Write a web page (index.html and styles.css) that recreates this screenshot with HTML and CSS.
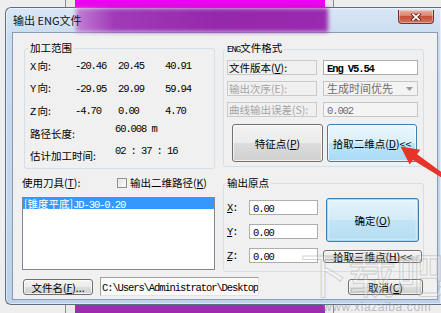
FILE: index.html
```html
<!DOCTYPE html>
<html lang="zh-CN">
<head>
  <meta charset="UTF-8" />
  <title>输出 ENG文件</title>
  <link rel="stylesheet" href="styles.css">
</head>
<body>

<!-- window behind the dialog -->
<div class="desk-window"><div class="desk-window-body"></div></div>

<!-- Dialog -->
<div class="dialog">
  <div class="titlebar">
    <div class="glass-tint"></div>
    <span class="title">输出 ENG文件</span>
    <button class="close-btn">
      <svg width="10" height="8" viewBox="0 0 10 8">
        <path d="M2 1.2 L8 6.8 M8 1.2 L2 6.8" stroke="#5c1d15" stroke-width="3.4" stroke-linecap="square" fill="none"/>
        <path d="M2 1.2 L8 6.8 M8 1.2 L2 6.8" stroke="#ffffff" stroke-width="1.8" stroke-linecap="square" fill="none"/>
      </svg>
    </button>
  </div>

  <div class="client">
    <div class="row-top">
      <!-- range -->
      <fieldset class="group group-range">
        <legend>加工范围</legend>
        <div class="range-grid">
          <span><span class="num">X</span>&nbsp;向:</span><span class="num">-20.46</span><span class="num">20.45</span><span class="num">40.91</span>
          <span><span class="num">Y</span>&nbsp;向:</span><span class="num">-29.95</span><span class="num">29.99</span><span class="num">59.94</span>
          <span><span class="num">Z</span>&nbsp;向:</span><span class="num">-4.70</span><span class="num">0.00</span><span class="num">4.70</span>
          <span>路径长度:</span><span class="num later">60.008 m</span>
          <span>估计加工时间:</span><span class="num later">02 : 37 : 16</span>
        </div>
      </fieldset>

      <!-- format -->
      <fieldset class="group group-format">
        <legend><span class="small">ENG</span>文件格式</legend>
        <div class="format-body">
          <div class="field-row">
            <div class="static-box">文件版本(<u>V</u>):</div>
            <div class="edit"><span class="num bold">Eng V5.54</span></div>
          </div>
          <div class="field-row">
            <div class="static-box off">输出次序(E):</div>
            <div class="combo">
              <span>生成时间优先</span>
              <svg width="7" height="4" viewBox="0 0 7 4"><path d="M0 0 H7 L3.5 4 Z" fill="#9a9a9a"/></svg>
            </div>
          </div>
          <div class="field-row">
            <div class="static-box off">曲线输出误差(S):</div>
            <div class="edit off"><span class="num">0.002</span></div>
          </div>
          <div class="btn-row">
            <button class="btn big">特征点(<u>P</u>)</button>
            <button class="btn big hot">拾取二维点(<u>D</u>)&lt;&lt;</button>
          </div>
        </div>
      </fieldset>
    </div>

    <div class="row-mid">
      <div class="tools">
        <div class="tools-head">
          <span class="lbl">使用刀具(<u>T</u>):</span>
          <span class="check"></span>
          <span>输出二维路径(<u>K</u>)</span>
        </div>
        <div class="listbox">
          <div class="sel">[锥度平底]<span class="num">JD-30-0.20</span></div>
        </div>
      </div>

      <fieldset class="group group-origin">
        <legend>输出原点</legend>
        <div class="origin-body">
          <div class="xyz">
            <span class="num"><u>X</u>:</span><div class="edit"><span class="num">0.00</span></div>
            <span class="num"><u>Y</u>:</span><div class="edit"><span class="num">0.00</span></div>
            <span class="num"><u>Z</u>:</span><div class="edit"><span class="num">0.00</span></div>
          </div>
          <div class="origin-btns">
            <button class="btn ok">确定(<u>O</u>)</button>
            <button class="btn pick3">拾取三维点(<u>H</u>)&lt;&lt;</button>
          </div>
        </div>
      </fieldset>
    </div>

    <div class="row-bottom">
      <button class="btn file">文件名(<u>F</u>)...</button>
      <div class="path"><span class="num">C:\Users\Administrator\Desktop</span></div>
      <button class="btn cancel">取消(<u>C</u>)</button>
    </div>
  </div>
</div>

<!-- site watermark -->
<div class="watermark">下载吧</div>
<div class="watermark-url">www.xiazaiba.com</div>

<!-- red pointer arrow -->
<svg class="arrow" width="441" height="313" viewBox="0 0 441 313">
  <polygon points="400.5,146.5 420.3,149.8 417.1,154.3 441,171.7 441,177.3 412.9,159.9 409.7,164.4" fill="#e5352b"/>
</svg>

</body>
</html>
```

FILE: styles.css
```css
* { margin: 0; padding: 0; box-sizing: border-box; }

body {
  width: 441px;
  height: 313px;
  overflow: hidden;
  position: relative;
  background: #eeeeee;
  font-family: "Noto Sans CJK SC", sans-serif;
  font-size: 10.5px;
  color: #000;
}

u { text-decoration: underline; }

.num {
  font-family: "Liberation Mono", monospace;
  font-size: 10.5px;
  letter-spacing: -1.1px;
}

.bold { font-weight: bold; }

/* window behind */
.desk-window {
  position: absolute;
  left: 65px;
  top: 0;
  width: 269px;
  height: 313px;
  border: 1px solid #8b8b8b;
  border-width: 0 1px;
  background: #e9e9e9;
  padding: 0 8px 0 9px;
}

.desk-window-body {
  height: 100%;
  background: linear-gradient(to bottom, #f000f0 0, #f000f0 20px, #a43ab8 280px, #9a2cb0 313px);
}

/* dialog frame */
.dialog {
  position: absolute;
  left: 5px;
  top: 7px;
  width: 436px;
  height: 298px;
  border: 1px solid #5f6f82;
  border-right: none;
  border-radius: 6px 0 0 6px;
  background: linear-gradient(to bottom, #d9e7f6 0, #cadcf0 30px, #bdd2ea 100%);
  box-shadow: inset 0 0 0 1px rgba(255,255,255,0.5);
  display: flex;
  flex-direction: column;
}

.titlebar {
  position: relative;
  height: 24px;
  flex: none;
  display: flex;
  align-items: center;
  padding-left: 7px;
}

.glass-tint {
  position: absolute;
  left: 70px;
  top: 0;
  width: 252px;
  height: 24px;
  background: linear-gradient(to right, #c27fd4 0, #a03bb8 15%, #9628ab 55%, #9a2aaf 100%);
  filter: blur(2px);
}

.title {
  position: relative;
  font-size: 11px;
  color: #111;
}

.close-btn {
  position: relative;
  margin-left: auto;
  margin-right: 7px;
  align-self: flex-start;
  margin-top: 2px;
  width: 36px;
  height: 14px;
  border: 1px solid #7a3128;
  border-top: none;
  border-radius: 0 0 4px 4px;
  background: linear-gradient(#eab0a2 0%, #d88470 45%, #c6503a 50%, #d27560 100%);
  box-shadow: inset 0 0 0 1px rgba(255,255,255,0.35);
  display: flex;
  align-items: center;
  justify-content: center;
}

/* client area */
.client {
  flex: 1;
  margin: 0 3px 4px 6px;
  border: 1px solid #8a9cb2;
  background: #f0f0f0;
  padding-left: 9px;
  display: flex;
  flex-direction: column;
}

.row-top {
  display: flex;
  align-items: flex-start;
  height: 136px;
  padding-top: 9px;
}

.group {
  border: 1px solid #d5dfe5;
  border-radius: 3px;
  min-width: 0;
}

.group legend {
  padding: 0 2px;
  margin-left: 1px;
  line-height: 12px;
  font-size: 10.5px;
}

.group legend .small {
  font-family: "Liberation Mono", monospace;
  font-size: 9px;
  letter-spacing: -1px;
}

.group-range {
  margin-left: 2px;
  width: 191px;
}

.group-range legend { margin-left: 3px; }

.range-grid {
  display: grid;
  grid-template-columns: 45px 43px 47px 1fr;
  grid-auto-rows: 22.5px;
  align-items: center;
  padding: 1px 0 0 5px;
  white-space: nowrap;
  line-height: 12px;
}

.range-grid .later {
  grid-column: 2 / 5;
  margin-left: 40px;
  align-self: start;
}

.group-format {
  margin-left: 8px;
  width: 201px;
}

.format-body {
  padding: 4px 5px 4px 3px;
}

.field-row {
  display: grid;
  grid-template-columns: 90px 95px;
  column-gap: 6px;
  height: 15px;
}

.field-row + .field-row { margin-top: 6px; }

.static-box {
  border: 1px solid #cacaca;
  line-height: 13px;
  padding-left: 1px;
  white-space: nowrap;
  overflow: hidden;
}

.static-box.off { color: #a4a4a4; }

.edit {
  border: 1px solid #abadb3;
  background: #fff;
  line-height: 13px;
  padding-left: 3px;
  white-space: nowrap;
  overflow: hidden;
}

.edit.off {
  background: #f4f4f4;
  border-color: #c6c6c6;
  color: #6d6d6d;
}

.combo {
  border: 1px solid #c6c6c6;
  background: #f3f3f3;
  color: #6d6d6d;
  font-size: 11px;
  line-height: 13px;
  display: flex;
  align-items: center;
  justify-content: space-between;
  padding: 0 4px 0 3px;
}

.btn-row {
  display: flex;
  gap: 4px;
  margin-top: 7px;
  padding-left: 5px;
}

/* buttons */
.btn {
  font-family: inherit;
  font-size: 10.5px;
  color: #000;
  padding: 0;
  border: 1px solid #707070;
  border-radius: 3px;
  background: linear-gradient(#f3f3f3 0%, #ebebeb 50%, #dddddd 50%, #cfcfcf 100%);
  box-shadow: inset 0 0 0 1px rgba(255,255,255,0.7);
  white-space: nowrap;
}

.btn.big {
  width: 91px;
  height: 38px;
}

.btn.big.hot { width: 90px; }

.btn.hot {
  border-color: #3c7fb1;
  background: linear-gradient(#eaf6fd 0%, #d9f0fc 50%, #bee6fd 50%, #a7d9f5 100%);
}

.btn.ok {
  width: 93px;
  height: 44px;
  margin-left: 3px;
  border-color: #3c7fb1;
  background: linear-gradient(#e4f3fb 0%, #d3ebf8 50%, #c3e4f6 50%, #b4ddf3 100%);
  box-shadow: inset 0 0 0 1px #9fdaf6, inset 0 0 3px 1px rgba(255,255,255,0.8);
}

.btn.pick3 {
  width: 99px;
  height: 13px;
  margin-top: 8px;
  line-height: 11px;
}

/* tools + list */
.row-mid {
  display: flex;
  align-items: flex-start;
  margin-top: 8px;
}

.tools { width: 193px; }

.tools-head {
  display: flex;
  align-items: center;
  height: 12px;
  line-height: 12px;
  white-space: nowrap;
}

.tools-head .lbl { width: 95px; }

.check {
  width: 10px;
  height: 10px;
  border: 1px solid #8f8f8f;
  background: linear-gradient(135deg, #dcdcdc, #ffffff);
  box-shadow: inset 0 0 0 1px #f2f2f2;
  margin-right: 3px;
}

.listbox {
  margin-top: 8px;
  height: 73px;
  border: 1px solid #828790;
  background: #fff;
}

.listbox .sel {
  background: #3399ff;
  color: #fff;
  height: 11px;
  line-height: 11px;
  padding-left: 1px;
  white-space: nowrap;
}

/* origin */
.group-origin {
  margin-left: 8px;
  width: 201px;
  height: 95px;
}

.origin-body {
  display: flex;
  padding: 9px 0 0 3px;
}

.xyz {
  display: grid;
  grid-template-columns: 22px 69px;
  grid-auto-rows: 15px;
  row-gap: 9px;
  align-items: center;
  margin-top: 2px;
}

.xyz .edit { height: 15px; }

.origin-btns {
  display: flex;
  flex-direction: column;
  margin-left: 5px;
}

/* bottom row */
.row-bottom {
  display: flex;
  align-items: center;
  height: 19px;
  margin-top: 5px;
  margin-left: 1px;
}

.btn.file {
  width: 70px;
  height: 16px;
}

.path {
  margin-left: 7px;
  width: 159px;
  height: 19px;
  border: 1px solid;
  border-color: #a0a0a0 #e3e3e3 #e3e3e3 #a0a0a0;
  background: #fbfbfb;
  line-height: 17px;
  padding-left: 1px;
  white-space: nowrap;
  overflow: hidden;
}

.btn.cancel {
  margin-left: 89px;
  width: 75px;
  height: 16px;
}

/* overlays */
.watermark {
  position: absolute;
  left: 300px;
  top: 244px;
  width: 141px;
  overflow: hidden;
  font-size: 48px;
  line-height: 56px;
  white-space: nowrap;
  color: rgba(255,255,255,0.2);
  -webkit-text-stroke: 1px rgba(150,150,150,0.4);
  pointer-events: none;
}

.watermark-url {
  position: absolute;
  left: 323px;
  top: 301px;
  font-family: "Liberation Sans", sans-serif;
  font-size: 12px;
  line-height: 12px;
  letter-spacing: 0.6px;
  color: rgba(140,140,150,0.55);
  pointer-events: none;
}

.arrow {
  position: absolute;
  left: 0;
  top: 0;
  pointer-events: none;
}
```
